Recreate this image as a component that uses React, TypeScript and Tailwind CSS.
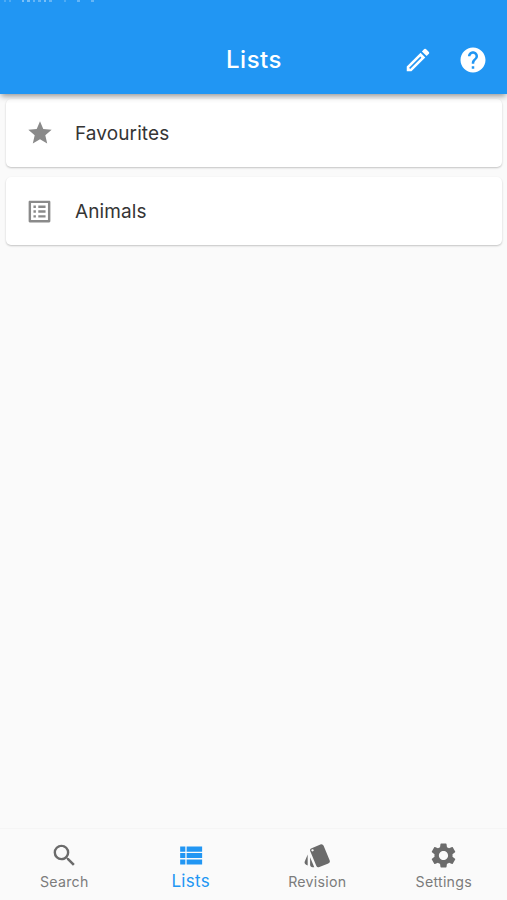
import React, { useState } from 'react';
import { MdHelp, MdOutlineListAlt, MdSearch, MdStar, MdStyle } from 'react-icons/md';

const PencilIcon = ({ className = '' }: any) => (
  <svg viewBox="0 0 24 24" fill="currentColor" className={className}>
    <path d="M3 17.25V21h3.75L17.81 9.94l-3.75-3.75L3 17.25zM20.71 7.04a1 1 0 0 0 0-1.41l-2.34-2.34a1 1 0 0 0-1.41 0l-1.83 1.83 3.75 3.75 1.83-1.83z" />
    <path d="M5.3 18.7 14.3 9.7" stroke="#2196f3" strokeWidth="1.2" fill="none" />
  </svg>
);

const ListIcon = ({ className = '' }: any) => (
  <svg viewBox="0 0 24 24" fill="currentColor" className={className}>
    <path d="M4 14h4v-4H4v4zm0 5h4v-4H4v4zM4 9h4V5H4v4zm5 5h12v-4H9v4zm0 5h12v-4H9v4zM9 5v4h12V5H9z" />
  </svg>
);

const GearIcon = ({ className = '' }: any) => (
  <svg viewBox="0 0 24 24" fill="currentColor" className={className}>
    <path d="M19.43 12.98c.04-.32.07-.64.07-.98s-.03-.66-.07-.98l2.11-1.65c.19-.15.24-.42.12-.64l-2-3.46c-.12-.22-.39-.3-.61-.22l-2.49 1c-.52-.4-1.08-.73-1.69-.98l-.38-2.65C14.46 2.18 14.25 2 14 2h-4c-.25 0-.46.18-.49.42l-.38 2.65c-.61.25-1.17.59-1.69.98l-2.49-1c-.23-.09-.49 0-.61.22l-2 3.46c-.13.22-.07.49.12.64l2.11 1.65c-.04.32-.07.65-.07.98s.03.66.07.98l-2.11 1.65c-.19.15-.24.42-.12.64l2 3.46c.12.22.39.3.61.22l2.49-1c.52.4 1.08.73 1.69.98l.38 2.65c.03.24.24.42.49.42h4c.25 0 .46-.18.49-.42l.38-2.65c.61-.25 1.17-.59 1.69-.98l2.49 1c.23.09.49 0 .61-.22l2-3.46c.12-.22.07-.49-.12-.64l-2.11-1.65zM12 15.8c-2.1 0-3.8-1.7-3.8-3.8s1.7-3.8 3.8-3.8 3.8 1.7 3.8 3.8-1.7 3.8-3.8 3.8z" />
  </svg>
);

const LISTS = [
  { name: 'Favourites', icon: MdStar, size: 'size-7' },
  { name: 'Animals', icon: MdOutlineListAlt, size: 'size-[29px] -ml-px' },
];

const TABS = [
  { name: 'Search', icon: MdSearch },
  { name: 'Lists', icon: ListIcon },
  { name: 'Revision', icon: MdStyle },
  { name: 'Settings', icon: GearIcon },
];

const ListCard = ({ name, icon: Icon, size }: any) => (
  <button className="flex h-[68px] w-full items-center rounded-[5px] bg-white pl-5 text-left shadow-[0_1px_2px_rgba(0,0,0,0.22)]">
    <span className="flex w-7 shrink-0 justify-center text-[#8a8a8a]">
      <Icon className={`shrink-0 ${size}`} />
    </span>
    <span className="mt-[2px] ml-[21px] text-[19px] tracking-[0.1px] text-[#353535]">{name}</span>
  </button>
);

export default function App() {
  const [tab, setTab] = useState('Lists');

  return (
    <div className="flex h-screen flex-col overflow-hidden bg-[#fafafa] font-['Inter',sans-serif]">
      <header className="relative z-10 h-[94px] shrink-0 bg-[#2196f3] text-white shadow-[0_3px_6px_-1px_rgba(0,0,0,0.42)]">
        {/* Tail of the status bar text */}
        <div className="flex h-[3px] gap-[3px] overflow-hidden pl-1">
          <span className="h-[2px] w-[2px] bg-white/20" />
          <span className="h-[2px] w-[2px] bg-white/20" />
          <span className="ml-2 h-[2px] w-[2px] bg-white/40" />
          <span className="h-[2px] w-[3px] bg-white/40" />
          <span className="h-[2px] w-[2px] bg-white/30" />
          <span className="h-[2px] w-[3px] bg-white/30" />
          <span className="h-[2px] w-[2px] bg-white/40" />
          <span className="h-[2px] w-[3px] bg-white/30" />
          <span className="ml-[9px] h-[2px] w-[2px] bg-white/20" />
          <span className="ml-[8px] h-[2px] w-[3px] bg-white/30" />
          <span className="ml-[8px] h-[2px] w-[3px] bg-white/30" />
        </div>
        <div className="grid h-[114px] grid-cols-[1fr_auto_1fr] items-center">
          <span />
          <h1 className="-mt-px pl-px text-2xl font-medium tracking-[0.5px]">Lists</h1>
          <div className="flex justify-end gap-[25px] pr-[19px]">
            <PencilIcon className="size-[30px]" />
            <MdHelp className="size-[30px]" />
          </div>
        </div>
      </header>

      <main className="flex flex-1 flex-col gap-[10px] pt-[5px] pr-[5px] pl-[6px]">
        {LISTS.map((list) => (
          <ListCard key={list.name} {...list} />
        ))}
      </main>

      <nav className="grid h-[72px] shrink-0 grid-cols-4 border-t border-[#f5f5f5] pl-px">
        {TABS.map(({ name, icon: Icon }) => {
          const active = name === tab;
          return (
            <button
              key={name}
              onClick={() => setTab(name)}
              className={`flex flex-col items-center pt-3 ${active ? 'text-[#2196f3]' : 'text-[#7c7c7c]'}`}
            >
              <Icon className={active ? '-mt-px size-[31px]' : 'size-[29px] text-[#6b6b6b]'} />
              <span
                className={
                  active
                    ? 'text-[17px] leading-5 tracking-[0.3px]'
                    : 'mt-[2px] text-[14.2px] leading-5 tracking-[0.25px]'
                }
              >
                {name}
              </span>
            </button>
          );
        })}
      </nav>
    </div>
  );
}
